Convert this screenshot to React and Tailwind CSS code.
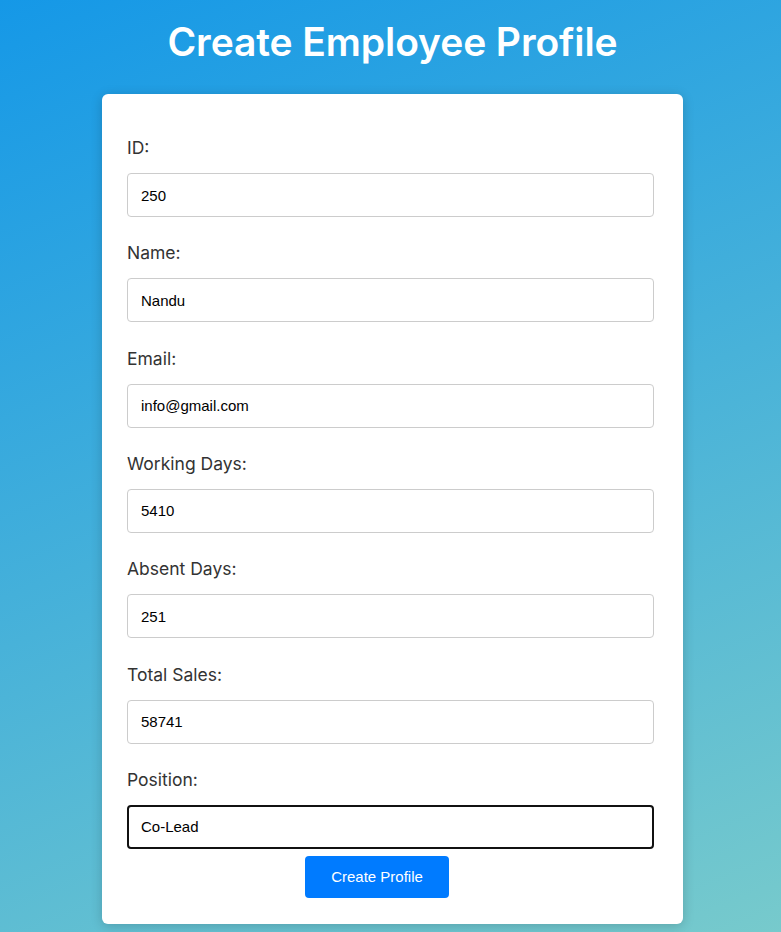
import { useState } from "react";

const fields = [
  { key: "id", label: "ID:", value: "250" },
  { key: "name", label: "Name:", value: "Nandu" },
  { key: "email", label: "Email:", value: "info@gmail.com" },
  { key: "workingDays", label: "Working Days:", value: "5410" },
  { key: "absentDays", label: "Absent Days:", value: "251" },
  { key: "totalSales", label: "Total Sales:", value: "58741" },
  { key: "position", label: "Position:", value: "Co-Lead", active: true },
];

export default function App() {
  const [form, setForm] = useState(
    Object.fromEntries(fields.map((f) => [f.key, f.value]))
  );

  return (
    <div className="min-h-[932px] bg-[linear-gradient(158deg,#1598e7,#77cacc)] pl-[4px] pb-[9px] font-['Inter',sans-serif]">
      <h1 className="pt-[17px] text-center text-[39px] leading-[50px] font-semibold tracking-[-0.1px] text-white">
        Create Employee Profile
      </h1>

      <form
        className="mx-auto mt-[27px] w-[581px] rounded-md bg-white pt-[40px] pr-[29px] pb-[26px] pl-[25px] shadow-[0_2px_12px_rgba(0,0,0,0.18)]"
        onSubmit={(e) => e.preventDefault()}
      >
        {fields.map((f, i) => (
          <div key={f.key} className={i === fields.length - 1 ? "mb-[7px]" : "mb-[22.33px]"}>
            <label className="mb-[11px] block text-[17.5px] leading-[28px] text-[#333]">
              {f.label}
            </label>
            <input
              value={form[f.key]}
              onChange={(e) => setForm({ ...form, [f.key]: e.target.value })}
              className={
                f.active
                  ? "block h-[44px] w-full rounded-[4px] border-2 border-[#111] px-[12px] font-['Liberation_Sans',Arial,sans-serif] text-[15px] text-black outline-none"
                  : "block h-[44px] w-full rounded-[4px] border border-[#ccc] px-[13px] font-['Liberation_Sans',Arial,sans-serif] text-[15px] text-black outline-none"
              }
            />
          </div>
        ))}

        <div className="flex pl-[178px]">
          <button
            type="submit"
            className="h-[42px] w-[144px] rounded-[4px] bg-[#007bff] font-['Liberation_Sans',Arial,sans-serif] text-[15px] text-white"
          >
            Create Profile
          </button>
        </div>
      </form>
    </div>
  );
}
